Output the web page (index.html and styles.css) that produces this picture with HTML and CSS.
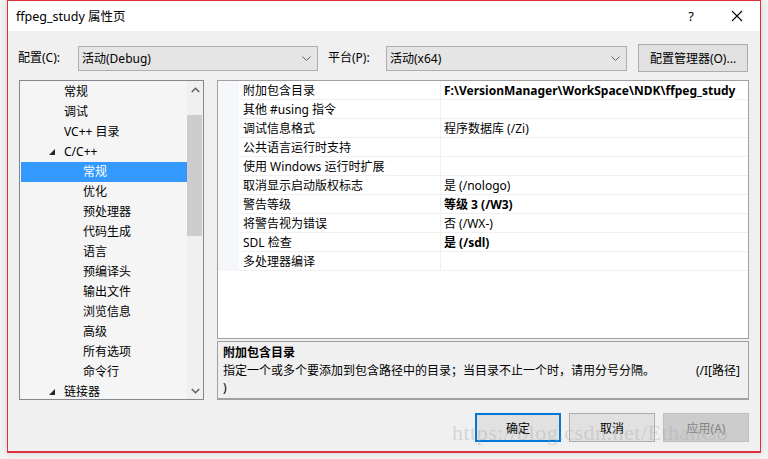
FILE: index.html
```html
<!DOCTYPE html>
<html lang="zh-CN">
<head>
    <meta charset="UTF-8">
    <title>ffpeg_study 属性页</title>
    <link rel="stylesheet" href="styles.css">
</head>
<body>
    <div class="window">
        <div class="titlebar">
            <span class="title">ffpeg_study 属性页</span>
            <span class="help">?</span>
            <span class="close">
                <svg width="12" height="12" viewBox="0 0 12 12"><path d="M1 1 L11 11 M11 1 L1 11" stroke="#000" stroke-width="1.1" fill="none"/></svg>
            </span>
        </div>

        <div class="config-row">
            <span class="label label-config">配置(C):</span>
            <div class="select select-config">
                <span>活动(Debug)</span>
                <svg class="chevron" width="9" height="5" viewBox="0 0 9 5"><path d="M0.5 0.5 L4.5 4.5 L8.5 0.5" stroke="#606060" fill="none"/></svg>
            </div>
            <span class="label label-platform">平台(P):</span>
            <div class="select select-platform">
                <span>活动(x64)</span>
                <svg class="chevron" width="9" height="5" viewBox="0 0 9 5"><path d="M0.5 0.5 L4.5 4.5 L8.5 0.5" stroke="#606060" fill="none"/></svg>
            </div>
            <button class="btn btn-manager">配置管理器(O)...</button>
        </div>

        <div class="main">
            <div class="tree">
                <ul class="tree-list">
                    <li class="lvl1">常规</li>
                    <li class="lvl1">调试</li>
                    <li class="lvl1">VC++ 目录</li>
                    <li class="lvl1 open"><span class="arrow"></span>C/C++</li>
                    <li class="lvl2 selected">常规</li>
                    <li class="lvl2">优化</li>
                    <li class="lvl2">预处理器</li>
                    <li class="lvl2">代码生成</li>
                    <li class="lvl2">语言</li>
                    <li class="lvl2">预编译头</li>
                    <li class="lvl2">输出文件</li>
                    <li class="lvl2">浏览信息</li>
                    <li class="lvl2">高级</li>
                    <li class="lvl2">所有选项</li>
                    <li class="lvl2">命令行</li>
                    <li class="lvl1 open"><span class="arrow"></span>链接器</li>
                </ul>
                <div class="scrollbar">
                    <div class="sb-btn">
                        <svg width="9" height="6" viewBox="0 0 9 6"><path d="M0.8 5 L4.5 1.3 L8.2 5" stroke="#606060" stroke-width="1.5" fill="none"/></svg>
                    </div>
                    <div class="sb-track"><div class="sb-thumb"></div></div>
                    <div class="sb-btn">
                        <svg width="9" height="6" viewBox="0 0 9 6"><path d="M0.8 1 L4.5 4.7 L8.2 1" stroke="#606060" stroke-width="1.5" fill="none"/></svg>
                    </div>
                </div>
            </div>

            <div class="right">
                <div class="grid">
                    <div class="row"><span class="gutter"></span><span class="name">附加包含目录</span><span class="value bold">F:\VersionManager\WorkSpace\NDK\ffpeg_study</span></div>
                    <div class="row"><span class="gutter"></span><span class="name">其他 #using 指令</span><span class="value"></span></div>
                    <div class="row"><span class="gutter"></span><span class="name">调试信息格式</span><span class="value">程序数据库 (/Zi)</span></div>
                    <div class="row"><span class="gutter"></span><span class="name">公共语言运行时支持</span><span class="value"></span></div>
                    <div class="row"><span class="gutter"></span><span class="name">使用 Windows 运行时扩展</span><span class="value"></span></div>
                    <div class="row"><span class="gutter"></span><span class="name">取消显示启动版权标志</span><span class="value">是 (/nologo)</span></div>
                    <div class="row"><span class="gutter"></span><span class="name">警告等级</span><span class="value bold">等级 3 (/W3)</span></div>
                    <div class="row"><span class="gutter"></span><span class="name">将警告视为错误</span><span class="value">否 (/WX-)</span></div>
                    <div class="row"><span class="gutter"></span><span class="name">SDL 检查</span><span class="value bold">是 (/sdl)</span></div>
                    <div class="row"><span class="gutter"></span><span class="name">多处理器编译</span><span class="value"></span></div>
                </div>
                <div class="desc">
                    <div class="desc-title">附加包含目录</div>
                    <div class="desc-line">
                        <span>指定一个或多个要添加到包含路径中的目录；当目录不止一个时，请用分号分隔。</span>
                        <span>(/I[路径]</span>
                    </div>
                    <div class="desc-line">)</div>
                </div>
            </div>
        </div>

        <div class="footer">
            <button class="btn btn-ok">确定</button>
            <button class="btn">取消</button>
            <button class="btn btn-disabled">应用(A)</button>
        </div>

        <div class="watermark">https://blog.csdn.net/EthanCo</div>
    </div>
</body>
</html>
```

FILE: styles.css
```css
/* Win10 style property dialog */
* { box-sizing: border-box; }
html, body { margin: 0; padding: 0; }
body {
    width: 768px;
    height: 459px;
    overflow: hidden;
    background: #f3f3f3;
    font-family: "Noto Sans", "Noto Sans CJK SC", sans-serif;
    font-size: 12px;
    color: #000;
}

.window {
    position: relative;
    margin-left: 7px;
    width: 754px;
    height: 453px;
    border: 1px solid #e0303e;
    border-bottom-width: 2px;
    background: #f0f0f0;
    box-shadow: 0 0 8px rgba(0, 0, 0, 0.12);
    overflow: hidden;
}

/* title bar */
.titlebar {
    height: 30px;
    background: #fff;
    display: flex;
    align-items: center;
    padding-left: 8px;
}
.title { flex: 1; font-size: 12.5px; line-height: 16px; margin-top: 1px; }
.help { width: 46px; text-align: center; font-size: 13px; }
.close { width: 46px; display: flex; justify-content: center; margin-right: 0; }

/* configuration row */
.config-row {
    margin-top: 13px;
    height: 28px;
    display: flex;
    align-items: center;
    padding-left: 10px;
}
.label { line-height: 16px; }
.label-config { width: 60px; }
.label-platform { width: 58px; }
.select {
    height: 25px;
    border: 1px solid #adadad;
    background: #e5e5e5;
    display: flex;
    align-items: center;
    justify-content: space-between;
    padding: 0 4px 0 3px;
}
.select-config { width: 240px; margin-right: 10px; }
.select-platform { width: 241px; margin-right: 11px; }
.chevron { margin-right: 2px; }

.btn {
    font-family: inherit;
    font-size: 12px;
    color: #000;
    background: #e1e1e1;
    border: 1px solid #adadad;
    padding: 0;
    height: 29px;
    width: 86px;
}
.btn-manager { width: 110px; height: 28px; }
.btn-ok { border: 2px solid #0078d7; }
.btn-disabled { background: #cccccc; border-color: #bfbfbf; color: #838383; }

/* main area */
.main {
    margin-top: 8px;
    padding-left: 11px;
    display: flex;
    gap: 13px;
    height: 320px;
}

.tree {
    width: 185px;
    height: 320px;
    border: 1px solid #828790;
    background: #f5f5f5;
    display: flex;
    overflow: hidden;
}
.tree-list {
    list-style: none;
    margin: 0;
    padding: 1px 0 0 1px;
    width: 167px;
}
.tree-list li {
    position: relative;
    height: 20px;
    line-height: 20px;
    white-space: nowrap;
}
.lvl1 { padding-left: 43px; }
.lvl2 { padding-left: 62px; }
.selected { background: #3399ff; color: #fff; }
.arrow {
    position: absolute;
    left: 28px;
    top: 7px;
    width: 0;
    height: 0;
    border-left: 6px solid transparent;
    border-bottom: 6px solid #262626;
}

.scrollbar {
    width: 16px;
    display: flex;
    flex-direction: column;
    background: #f0f0f0;
}
.sb-btn {
    height: 17px;
    display: flex;
    align-items: center;
    justify-content: center;
}
.sb-track { flex: 1; padding-top: 17px; }
.sb-thumb { width: 15px; height: 121px; background: #cdcdcd; }

.right {
    width: 532px;
    display: flex;
    flex-direction: column;
    gap: 2px;
}

.grid {
    height: 259px;
    border: 1px solid #a0a0a0;
    background: #fff;
    overflow: hidden;
}
.row {
    display: flex;
    height: 19px;
    line-height: 20px;
}
.gutter { width: 21px; background: #f5f7fb; flex-shrink: 0; }
.name {
    width: 202px;
    flex-shrink: 0;
    padding-left: 4px;
    border-bottom: 1px solid #f0f0f0;
    border-right: 1px solid #f0f0f0;
    white-space: nowrap;
    overflow: hidden;
}
.value {
    flex: 1;
    padding-left: 3px;
    border-bottom: 1px solid #f0f0f0;
    white-space: nowrap;
    overflow: hidden;
}
.bold { font-weight: 700; }

.desc {
    flex: 1;
    border: 1px solid #a0a0a0;
    border-bottom-width: 2px;
    background: #f0f0f0;
    padding: 2px 8px 0 5px;
}
.desc-title { font-weight: 700; line-height: 18px; }
.desc-line {
    display: flex;
    justify-content: space-between;
    line-height: 17px;
}

.footer {
    margin-top: 13px;
    padding-right: 11px;
    display: flex;
    justify-content: flex-end;
    gap: 8px;
}

.watermark {
    position: absolute;
    left: 444px;
    top: 419px;
    font-family: "Liberation Serif", serif;
    font-size: 22px;
    color: rgba(170, 170, 170, 0.4);
    white-space: nowrap;
    letter-spacing: 0.5px;
}
```
